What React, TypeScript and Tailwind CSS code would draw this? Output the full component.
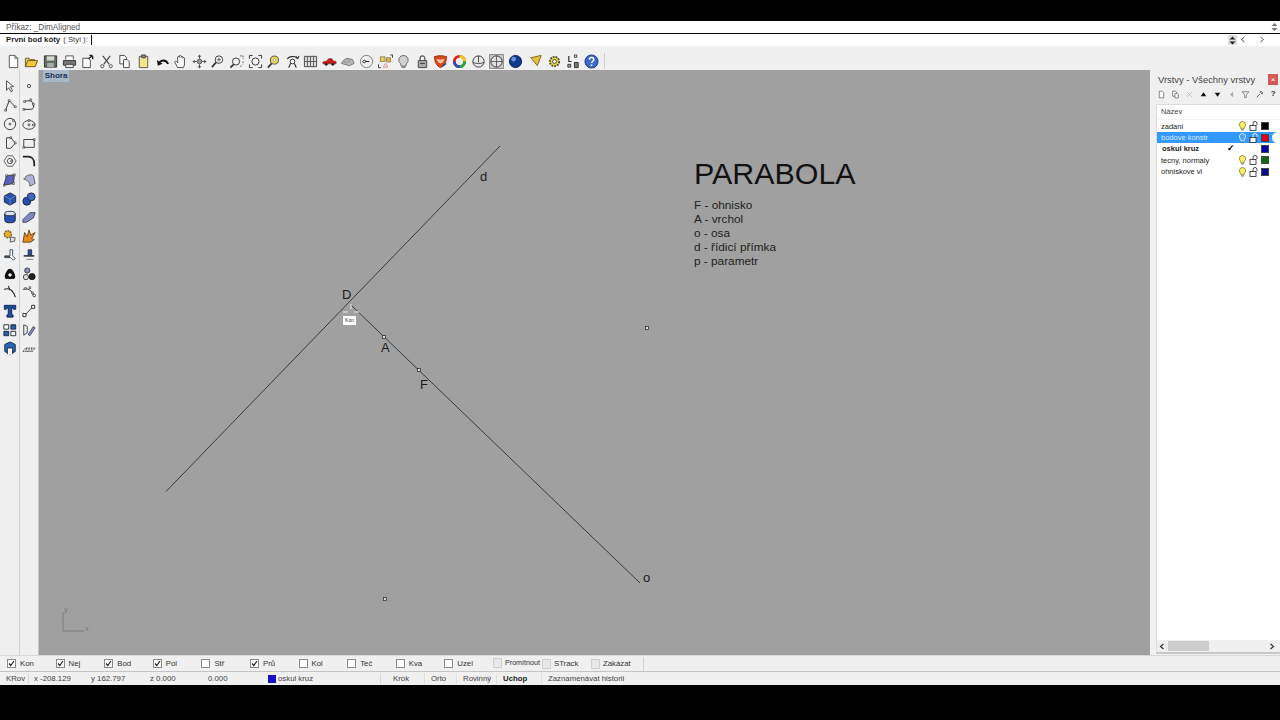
import type { ReactNode } from "react";

const FONT = "font-['Liberation_Sans',Arial,sans-serif]";

function Ico({ children, size = 16 }: { children: ReactNode; size?: number }) {
  return (
    <svg width={size} height={size} viewBox="0 0 16 16" fill="none" stroke="#333" strokeWidth="1" strokeLinejoin="round">
      {children}
    </svg>
  );
}

const Pt = ({ x, y }: { x: number; y: number }) => <rect x={x - 1} y={y - 1} width="2" height="2" fill="#fff" stroke="#222" strokeWidth="0.7" />;

// top toolbar, left to right
const topIcons: ReactNode[] = [
  <><path d="M3.5 1.5h6l3 3v10h-9z" fill="#fff" stroke="#555" /><path d="M9.5 1.5v3h3" stroke="#555" /></>,
  <><path d="M1.5 13.5v-9h4l1 1.5h5v1.5" fill="#e8c860" stroke="#6a5a20" /><path d="M1.5 13.5l2.5-6.5h10.5l-2.5 6.5z" fill="#f0c838" stroke="#6a5a20" /></>,
  <><rect x="1.5" y="2" width="13" height="12" fill="#5f6f60" stroke="#333" /><rect x="4" y="2.5" width="8" height="4.5" fill="#d8d8d8" stroke="none" /><rect x="4.5" y="9.5" width="7" height="4.5" fill="#aab0a8" stroke="none" /></>,
  <><path d="M4 6V2h8v4" fill="#fff" stroke="#555" /><path d="M1.5 7h13v5h-13z" fill="#777" /><path d="M4 11h8v3.5H4z" fill="#e8e8e8" stroke="#444" /></>,
  <><path d="M3 4.5h6l2 2v8H3z" fill="#fff" stroke="#444" /><path d="M9 5l4-3M13.5 2v3.5M10 1.5h3.5" stroke="#222" strokeWidth="1.4" /></>,
  <><path d="M4 2l7 9M12 2l-7 9" stroke="#444" strokeWidth="1.2" /><circle cx="3.5" cy="13" r="1.7" stroke="#555" /><circle cx="12.5" cy="13" r="1.7" stroke="#555" /></>,
  <><path d="M3 1.5h5l2 2v7H3z" fill="#fff" stroke="#444" /><path d="M7 6h4l2 2v6.5H7z" fill="#fff" stroke="#444" /></>,
  <><rect x="3.5" y="2.5" width="9" height="12" fill="#f2e68a" stroke="#555" /><rect x="6" y="1" width="4" height="3" fill="#888" stroke="#444" /></>,
  <><path d="M14 10.5C12 6.5 8 6 5 8.5" stroke="#111" strokeWidth="2.2" /><path d="M2 6.5l1 6 5-2z" fill="#111" stroke="none" /></>,
  <path d="M5 14.5L2 9c-.5-1.2 1-1.8 1.8-.8L5 9.5V3.5c0-1.3 1.8-1.300 1.800 0V2.500c0-1.300 1.900-1.300 1.900 0v1c0-1.200 1.800-1.200 1.800 0v1c0-1.100 1.700-1.100 1.700 0v6c0 2-.7 3-1.200 4z" fill="#fff" stroke="#333" strokeWidth="0.9" />,
  <><circle cx="8" cy="8" r="2.5" fill="#999" stroke="#555" /><path d="M8 1v4M8 11v4M1 8h4M11 8h4" stroke="#444" /><path d="M8 .5l-2 2.5h4zM8 15.5l-2-2.500h4zM.5 8L3 6v4zM15.5 8L13 6v4z" fill="#555" stroke="none" /></>,
  <><circle cx="9.5" cy="6" r="4" fill="#f4f4f4" stroke="#333" /><path d="M6.5 9L2 14" stroke="#333" strokeWidth="1.8" /><path d="M7.5 6h4M9.5 4v4" stroke="#333" strokeWidth="0.8" /></>,
  <><circle cx="7.5" cy="8" r="3.8" fill="#f4f4f4" stroke="#333" /><path d="M5 11l-3.5 3.5" stroke="#333" strokeWidth="1.8" /><path d="M12 2h3v3M15 8v3M12 13h2" stroke="#444" strokeDasharray="1.5 1" /></>,
  <><circle cx="8" cy="8" r="3.8" fill="#f4f4f4" stroke="#333" /><path d="M1.5 5V1.5H5M11 1.5h3.5V5M14.5 11v3.5H11M5 14.5H1.5V11" stroke="#333" /></>,
  <><circle cx="9" cy="6.5" r="4.3" fill="#f0d850" stroke="#444" /><path d="M6 10l-4 4.5" stroke="#333" strokeWidth="1.8" /><circle cx="9" cy="6.5" r="1.5" fill="#fff" stroke="#aa8" /></>,
  <><path d="M2.5 5.5C4 2 11 1.5 13.5 5M11.5 2.5l2 2.5 1.500-3" stroke="#222" strokeWidth="1.1" /><circle cx="8" cy="8" r="2.5" fill="#fff" stroke="#333" /><path d="M6 10l-2 4.5M10 10l2 4.5" stroke="#222" strokeWidth="1.2" /></>,
  <><rect x="1.5" y="2.5" width="13" height="11" fill="#ddd" stroke="#444" /><path d="M8 2.5v11M1.5 8h13M4.7 2.5v11M11.3 2.5v11" stroke="#555" /></>,
  <><path d="M1 10.500V8.500l4-1 2-2.500h3.500l1.500 2.500 3 .5v2.500H1z" fill="#c81818" stroke="#801010" strokeWidth="0.6" /><circle cx="4.500" cy="11" r="1.500" fill="#222" stroke="none" /><circle cx="11.500" cy="11" r="1.500" fill="#222" stroke="none" /></>,
  <><path d="M1.5 10l2-3 4-2.5 6 1.500 1.500 4-5 2.500z" fill="#bbb" stroke="#777" /><path d="M4 7l5 5M7 5l5 5.500M2.500 10l9-3" stroke="#888" strokeWidth="0.6" /></>,
  <><circle cx="8" cy="8" r="6.5" fill="#f2f2f2" stroke="#777" /><path d="M5 8h6" stroke="#222" strokeWidth="1.2" /><circle cx="5.5" cy="8" r="1.4" fill="#fff" stroke="#222" /></>,
  <><rect x="2.5" y="3" width="5" height="5" fill="#e8d050" stroke="#886" /><rect x="9" y="4" width="4.5" height="4.5" fill="#e8b040" stroke="#886" /><path d="M8 10l2.5 4h-5z" fill="#eee" stroke="#c66" strokeWidth="0.7" /><path d="M0.5 11v3.5H3M13 1h2.500v3" stroke="#333" /></>,
  <><path d="M8 1.5a5 5 0 0 1 3 9l-.5 2.5h-5L5 10.500a5 5 0 0 1 3-9z" fill="#d0d0d0" stroke="#666" /><rect x="6" y="13" width="4" height="2" fill="#888" stroke="none" /></>,
  <><rect x="3.5" y="7" width="9" height="7.5" fill="#aaa" stroke="#444" /><path d="M5.5 7V4.500a2.500 2.500 0 0 1 5 0V7" stroke="#555" strokeWidth="1.3" /><rect x="5.5" y="9.5" width="5" height="1.2" fill="#444" stroke="none" /></>,
  <><path d="M1.5 3c3-1.500 10-1.500 13 0-.5 6-2.500 10-6.500 11.500C4 13 2 9 1.500 3z" fill="#d84818" stroke="#903010" /><path d="M3.5 5c3 1 6 1 9 0-1 3-3 5-4.500 5S4.500 8 3.500 5z" fill="#f0c0a0" stroke="none" /><path d="M10 13l4-3" stroke="#2040a0" strokeWidth="1.5" /></>,
  <><circle cx="8" cy="8" r="5.5" stroke="#e02020" strokeWidth="3" /><path d="M8 2.5a5.500 5.500 0 0 1 5.500 5.500" stroke="#e8d020" strokeWidth="3" /><path d="M13.5 8A5.500 5.500 0 0 1 8 13.500" stroke="#20b040" strokeWidth="3" /><path d="M8 13.5A5.500 5.500 0 0 1 2.500 8" stroke="#2050d0" strokeWidth="3" /></>,
  <><circle cx="8" cy="8" r="6" fill="#e8e8e8" stroke="#333" /><path d="M2 9c3 1.500 9 1.500 12 0M8 2v7" stroke="#444" /></>,
  <><rect x="0.5" y="0.5" width="15" height="15" fill="#c8c8c8" stroke="#888" /><circle cx="8" cy="8" r="6" fill="#e0e0e0" stroke="#333" /><path d="M2 8h12M8 2v12" stroke="#444" strokeWidth="0.8" /></>,
  <><circle cx="8" cy="8" r="6.5" fill="#103a8c" stroke="#0a2050" /><circle cx="6" cy="5.5" r="2.5" fill="#6a90d8" stroke="none" /></>,
  <path d="M3 4l11-2.500-4 11z" fill="#e8c040" stroke="#806020" />,
  <><circle cx="8" cy="8" r="5" fill="#e8d040" stroke="#554" strokeDasharray="2 1" strokeWidth="2" /><circle cx="8" cy="8" r="2" fill="#fff" stroke="#444" /></>,
  <><path d="M3 2v6h3" stroke="#333" strokeWidth="1.3" /><rect x="9" y="1" width="2.5" height="2.5" fill="#fff" stroke="#333" /><rect x="2" y="11" width="3" height="3" fill="#aaa" stroke="#333" /><rect x="9" y="9" width="4" height="5.5" fill="#777" stroke="#333" /></>,
  <><circle cx="8" cy="8" r="7" fill="#3a68c8" stroke="#203880" /><path d="M5.8 6c0-3 4.600-3 4.600 0 0 1.800-2.300 1.800-2.300 3.700" stroke="#fff" strokeWidth="1.6" /><circle cx="8" cy="12" r="1" fill="#fff" stroke="none" /></>,
];

const blueFill = "#2a50b0";

// left toolbar, two per row
const leftIcons: [ReactNode, ReactNode][] = [
  [<path d="M4 2l8 6.500-3.500.5 2.500 4.500-2 1-2.500-4.500L4 13z" fill="#eee" stroke="#444" />, <circle cx="8" cy="8" r="1.8" fill="#fff" stroke="#333" />],
  [<><path d="M3 14L7 3l7 7" stroke="#222" /><Pt x={3} y={14} /><Pt x={7} y={3} /><Pt x={14} y={10} /></>, <><path d="M2 13h8c3 0 4-3 3-6S9 2 3 4" stroke="#222" /><Pt x={2} y={13} /><Pt x={13} y={7} /><Pt x={3} y={4} /><Pt x={10} y={2} /></>],
  [<><circle cx="8" cy="8" r="6.5" stroke="#333" /><Pt x={8} y={8} /><Pt x={12} y={4} /></>, <><ellipse cx="8" cy="9" rx="7" ry="5" stroke="#333" /><Pt x={8} y={9} /><Pt x={8} y={4} /><Pt x={13} y={9} /></>],
  [<><path d="M4 2h5l5 6-5 6H4z" stroke="#333" /><Pt x={9} y={2} /><Pt x={14} y={8} /></>, <><rect x="2" y="4" width="12" height="9" stroke="#333" /><Pt x={14} y={4} /><Pt x={2} y={13} /></>],
  [<><path d="M5 2h6l4 6-4 6H5L1 8z" stroke="#555" /><circle cx="8" cy="8" r="3" stroke="#444" /><Pt x={10} y={8} /></>, <path d="M1 3h6c4 0 7 3 7 8v3" stroke="#222" strokeWidth="2" />],
  [<><path d="M4 3l9-1-1 10-11 2z" fill="#5a60b8" stroke="#333" /><Pt x={4} y={3} /><Pt x={13} y={2} /><Pt x={12} y={12} /><Pt x={1} y={14} /></>, <path d="M2 7c3-5 8-6 11-4l2 9-6 3c0-4-2-7-7-8z" fill="#b0b4d8" stroke="#555" />],
  [<><path d="M8 1l6.500 3.500v7L8 15l-6.500-3.500v-7z" fill={blueFill} stroke="#123" /><path d="M8 8l6.500-3.500M8 8v7M8 8L1.500 4.500" stroke="#8aa0e0" strokeWidth="0.7" /></>, <><circle cx="5.5" cy="10.5" r="4.5" fill={blueFill} stroke="#123" /><circle cx="10.5" cy="5.5" r="4.5" fill="#4064c8" stroke="#123" /></>],
  [<><path d="M2 4v8c0 3.500 12 3.500 12 0V4" fill={blueFill} stroke="#123" /><ellipse cx="8" cy="4" rx="6" ry="2.5" fill="#dde" stroke="#234" /></>, <path d="M1 11l8-8h6l-2 6-8 5H1z" fill="#8088c0" stroke="#345" />],
  [<><circle cx="5.5" cy="6" r="4" fill="#e8b020" stroke="#654" strokeDasharray="2 1" strokeWidth="1.5" /><path d="M9 9l5 1-1 4-5 1z" fill="#ddd" stroke="#555" /></>, <path d="M1 15l2-11 3 5 2-8 2 6 5-3-4 7 3 1-4 3z" fill="#e88820" stroke="#604010" />],
  [<><path d="M2 9h6V2h3v7l3 3-2 2-3-3H2z" fill="#fff" stroke="#345" /><path d="M2 10h6" stroke="#444" strokeWidth="2" /></>, <><path d="M2 9h12" stroke="#345" strokeWidth="2" /><path d="M7 8V2h4v6z" fill={blueFill} stroke="#234" /><path d="M5 13h8" stroke="#777" /></>],
  [<path d="M8 2c3 0 6 6 6 9 0 2-2 3-3.500 2.500-1.500.5-3.500.5-5 0C4 14 2 13 2 11c0-3 3-9 6-9zM8 7a2 2 0 1 0 .01 0z" fill="#111" fillRule="evenodd" stroke="none" />, <><circle cx="6" cy="4" r="3" fill="#8a90b8" stroke="#333" /><circle cx="4.5" cy="11.5" r="3" fill="#ddd" stroke="#333" /><circle cx="11.5" cy="11" r="3.5" fill="#222" stroke="#111" /></>],
  [<path d="M1 5c6-2 11 1 13 9M6 1l2 5" stroke="#222" strokeWidth="1.2" />, <><path d="M1 5c6-2 10 1 12 7" stroke="#222" /><Pt x={4} y={4} /><Pt x={9} y={3} /><Pt x={12} y={9} /><circle cx="14" cy="12" r="1.5" fill="#fff" stroke="#333" /></>],
  [<path d="M1.500 1.500h13v4.500h-2.500l-.5-1.500H10V12l1.500.5v2.500h-7v-2.500L6 12V4.500H4.500L4 6H1.500z" fill="#1f4fa0" stroke="#0a2050" />, <><path d="M3.500 12.500L12 3.500" stroke="#333" /><rect x="1" y="11" width="3.5" height="3.5" fill="#fff" stroke="#222" /><rect x="11" y="1.5" width="3.5" height="3.5" fill="#fff" stroke="#222" /></>],
  [<><rect x="1" y="2" width="5.5" height="5" fill="#fff" stroke="#123" /><rect x="9" y="2" width="5.5" height="5" fill="#2a60b0" stroke="#123" /><rect x="1" y="9.5" width="5.5" height="5" fill="#2a60b0" stroke="#123" /><rect x="9" y="9.5" width="5.5" height="5" fill="#fff" stroke="#123" /></>, <><path d="M2 2v12M2 2l4 2v7l-4 3" stroke="#333" /><path d="M7 13l6-9 2 1.500-6 9z" fill="#8090c8" stroke="#445" /></>],
  [<><path d="M2 4l6-3 6 3v8l-6 3-6-3z" fill="#2a64b8" stroke="#123" /><path d="M5 15V8h6v7" fill="#fff" stroke="#123" /></>, <path d="M1 12l3-4h11l-3 4zM5 8v4M8 8v4M11 8v4" fill="#ddd" stroke="#555" strokeDasharray="2 0.8" />],
];

function TopBar() {
  return (
    <div className="flex items-center h-[18px] bg-[#f0f0f0] pl-[4px]">
      {topIcons.map((icon, i) => (
        <div key={i} className={`flex items-center justify-center w-[18.6px] h-[18px] shrink-0 ${i === 28 ? "ml-[2px]" : ""}`}>
          <Ico size={15}>{icon}</Ico>
        </div>
      ))}
      <div className="ml-[3px] h-[16px] border-l border-[#d0d0d0]" />
    </div>
  );
}

function LeftBar() {
  return (
    <div className="relative w-[39px] shrink-0 bg-[#f0f0f0] pt-[7px] border-r border-[#c8c8c8]">
      <div className="absolute left-[19px] top-0 bottom-0 border-l border-[#d0d0d0]" />
      {leftIcons.map(([a, b], i) => (
        <div key={i} className="flex h-[18.72px]">
          <div className="flex items-center justify-center w-[20px]"><Ico size={14}>{a}</Ico></div>
          <div className="flex items-center justify-center w-[18px]"><Ico size={14}>{b}</Ico></div>
        </div>
      ))}
    </div>
  );
}

const labels = [
  { t: "D", x: 342, y: 287 },
  { t: "d", x: 480, y: 169 },
  { t: "A", x: 381, y: 340 },
  { t: "F", x: 420, y: 377 },
  { t: "o", x: 643, y: 570 },
];

const notes = ["F - ohnisko", "A - vrchol", "o - osa", "d - řídicí přímka", "p - parametr"];

function Viewport() {
  return (
    <div className="relative flex-1 bg-[#a0a0a0] overflow-hidden">
      <div className="absolute left-[4px] top-0 h-[12px] w-[26px] bg-[#a9b8c8] flex items-center justify-center text-[8px] font-bold text-[#1c3050]">Shora</div>
      <svg className="absolute inset-0" width="1111" height="585" viewBox="39 70 1111 585" fill="none">
        <path d="M166 491.5L500 146" stroke="#222" strokeWidth="0.8" />
        <path d="M351 305L640 583" stroke="#222" strokeWidth="0.8" />
        {[[647, 328], [385, 599], [384, 337], [419, 370]].map(([x, y]) => (
          <rect key={`${x}-${y}`} x={x - 1.5} y={y - 1.5} width="3" height="3" fill="#ddd" stroke="#222" strokeWidth="0.7" />
        ))}
        <path d="M343 312h5M354 312h5M351 304v5" stroke="#eee" strokeWidth="1" />
        <path d="M63 612v19h21" stroke="#7c7c7c" strokeWidth="1" />
      </svg>
      <span className="absolute left-[304px] top-[246px] w-[13px] h-[9px] bg-white text-[5px] leading-[9px] text-center text-[#333]">Kon</span>
      {labels.map((l) => (
        <span key={l.t} className="absolute text-[13px] leading-[16px] text-[#1c1c1c]" style={{ left: l.x - 39, top: l.y - 70 }}>{l.t}</span>
      ))}
      <span className="absolute left-[25px] top-[535px] text-[7px] text-[#777]">y</span>
      <span className="absolute left-[46px] top-[554px] text-[7px] text-[#777]">x</span>
      <div className="absolute left-[655px] top-[86px] text-[#111]">
        <div className="text-[30.4px] leading-[34px]">PARABOLA</div>
        <div className="mt-[9px] text-[11.8px] leading-[13.9px] text-[#222]">
          {notes.map((n) => <div key={n}>{n}</div>)}
        </div>
      </div>
    </div>
  );
}

const layers = [
  { name: "zadani", color: "#000000", on: true },
  { name: "bodove konstr", color: "#e00010", on: true, selected: true },
  { name: "oskul kruz", color: "#0000a8", current: true },
  { name: "tecny, normaly", color: "#0b6a1e", on: true },
  { name: "ohniskove vl", color: "#0a0a90", on: true },
];

const panelIcons: ReactNode[] = [
  <path d="M4 2h5l3 3v9H4z" fill="#fff" stroke="#333" />,
  <><path d="M3 2h5l2 2v7H3z" fill="#fff" stroke="#333" /><path d="M7 6h4l2 2v6H7z" fill="#fff" stroke="#333" /></>,
  <path d="M4 4l8 8M12 4l-8 8" stroke="#aaa" strokeWidth="1.2" />,
  <path d="M8 4l5 7H3z" fill="#111" stroke="none" />,
  <path d="M8 12l5-7H3z" fill="#111" stroke="none" />,
  <path d="M5 8l6-5v10z" fill="#aaa" stroke="none" />,
  <path d="M2 3h12L9.5 8.5V13l-3 1V8.5z" fill="#eee" stroke="#444" />,
  <path d="M3 13l6-6M9 3a3 3 0 0 1 4 4l-2-1-2-2z" stroke="#333" strokeWidth="1.3" />,
];

function Bulb({ on }: { on?: boolean }) {
  return (
    <svg width="9" height="10" viewBox="0 0 9 10" fill="none">
      <path d="M4.5 .5a3.200 3.200 0 0 1 1.800 5.800L6 8H3l-.3-1.700A3.200 3.200 0 0 1 4.500 .5z" fill={on ? "#f6ee70" : "#4aa0ff"} stroke={on ? "#807a10" : "#fff"} strokeWidth="0.8" />
      <path d="M3.3 9h2.400" stroke="#666" />
    </svg>
  );
}

function OpenLock({ selected }: { selected?: boolean }) {
  return (
    <svg width="10" height="10" viewBox="0 0 10 10" fill="none">
      <rect x="1" y="4.5" width="6" height="5" fill="#fff" stroke="#222" strokeWidth="0.8" />
      <path d="M4 4.5V2.500a2 2 0 0 1 4 0V4" stroke={selected ? "#fff" : "#333"} strokeWidth="0.9" />
    </svg>
  );
}

function LayerPanel() {
  return (
    <div className="w-[130px] shrink-0 bg-[#f0f0f0] flex flex-col pb-[1px]">
      <div className="relative h-[16px] flex items-end pl-[8px] text-[9.4px] leading-[13px] text-[#444]">
        Vrstvy - Všechny vrstvy
        <div className="absolute right-[2px] top-[4px] w-[10px] h-[11px] bg-[#d45a5a] flex items-center justify-center text-white text-[8px] leading-none">×</div>
      </div>
      <div className="flex items-center h-[16px] pl-[5px] mb-[2px] gap-[0.5px]">
        {panelIcons.map((icon, i) => (
          <div key={i} className="flex items-center justify-center w-[13.7px]">
            <Ico size={9}>{icon}</Ico>
          </div>
        ))}
        <div className="w-[13.7px] text-center text-[8px] font-bold text-[#333]">?</div>
      </div>
      <div className="flex-1 ml-[6px] bg-white border-t border-l border-[#dcdcdc] border-b-2 border-b-[#c8c8c8] flex flex-col min-h-0">
        <div className="h-[15px] pl-[4px] mb-[0.5px] flex items-center text-[7.5px] text-[#444] border-b border-[#f2f2f2]">Název</div>
        {layers.map((l) => (
          <div key={l.name} className={`relative flex items-center h-[11.4px] text-[7.5px] ${l.selected ? "bg-[#3399ff] text-[#dcecff]" : "text-[#222]"} ${l.current ? "font-bold text-[#111] pl-[5px]" : "pl-[4px]"}`}>
            <span className={`whitespace-nowrap ${l.current ? "w-[63px]" : "w-[64px]"}`}>{l.name}</span>
            <span className="w-[12px] text-center text-[9px] leading-none text-black">{l.current ? "✓" : ""}</span>
            <span className="w-[11px] flex justify-center">{!l.current && <Bulb on={!l.selected} />}</span>
            <span className="w-[11px] flex justify-center">{!l.current && <OpenLock selected={l.selected} />}</span>
            <span className="ml-[2px] w-[8px] h-[8px] border border-[#444]" style={{ backgroundColor: l.color }} />
            {l.selected && <span className="absolute right-0 w-[8px] h-[11px] rounded-l-full bg-white" />}
          </div>
        ))}
        <div className="flex-1" />
        <div className="h-[12px] flex items-center bg-[#f0f0f0] pl-[2px] pr-[5px] text-[#333]">
          <svg width="6" height="7" viewBox="0 0 6 7" fill="none"><path d="M4.5 1L1.5 3.5l3 2.500" stroke="#333" strokeWidth="1.2" /></svg>
          <div className="h-[10px] w-[41px] ml-[3px] bg-[#cdcdcd]" />
          <svg className="ml-auto" width="6" height="7" viewBox="0 0 6 7" fill="none"><path d="M1.5 1l3 2.500-3 2.500" stroke="#333" strokeWidth="1.2" /></svg>
        </div>
      </div>
    </div>
  );
}

const snaps = [
  { n: "Kon", on: true },
  { n: "Nej", on: true },
  { n: "Bod", on: true },
  { n: "Pol", on: true },
  { n: "Stř", on: false },
  { n: "Prů", on: true },
  { n: "Kol", on: false },
  { n: "Teč", on: false },
  { n: "Kva", on: false },
  { n: "Uzel", on: false },
];

function Check({ on }: { on: boolean }) {
  return (
    <span className="w-[9px] h-[9px] bg-white border border-[#8a8a8a] flex items-center justify-center">
      {on && (
        <svg width="7" height="7" viewBox="0 0 7 7" fill="none"><path d="M1 3.5l1.800 2L6 1" stroke="#222" strokeWidth="1.2" /></svg>
      )}
    </span>
  );
}

function SnapBar() {
  return (
    <div className="flex items-center h-[16px] bg-[#f0f0f0] pl-[7px] text-[7.8px] text-[#333] border-t border-[#d8d8d8]">
      {snaps.map((s) => (
        <div key={s.n} className="flex items-center gap-[4px] w-[48.6px] shrink-0">
          <Check on={s.on} />
          <span>{s.n}</span>
        </div>
      ))}
      <div className="flex items-center gap-[3px] w-[49px]">
        <span className="w-[9px] h-[10px] shrink-0 bg-[#e8e8e8] border border-[#cfcfcf]" />
        <span className="whitespace-nowrap text-[7.2px]">Promítnout</span>
      </div>
      <div className="flex items-center gap-[3px] w-[49px]">
        <span className="w-[9px] h-[10px] shrink-0 bg-[#e8e8e8] border border-[#cfcfcf]" />
        <span>STrack</span>
      </div>
      <div className="flex items-center gap-[3px] w-[52px]">
        <span className="w-[9px] h-[10px] shrink-0 bg-[#e8e8e8] border border-[#cfcfcf]" />
        <span>Zakázat</span>
      </div>
      <div className="h-[14px] border-l border-[#d4d4d4]" />
    </div>
  );
}

function StatusBar() {
  return (
    <div className="flex items-center h-[14px] bg-[#f0f0f0] border-t border-[#c4c4c4] text-[7.8px] text-[#444] whitespace-nowrap">
      <div className="w-[28px] pl-[6px]">KRov</div>
      <div className="w-[58px] pl-[5px] border-l border-[#d8d8d8]">x -208.129</div>
      <div className="w-[59px] pl-[5px]">y 162.797</div>
      <div className="w-[58px] pl-[5px]">z 0.000</div>
      <div className="w-[65px] pl-[5px]">0.000</div>
      <div className="w-[112px] flex items-center gap-[2px]">
        <span className="w-[8px] h-[8px] bg-[#1a10c8]" />
        oskul kruz
      </div>
      <div className="w-[44px] pl-[12px] border-l border-[#d8d8d8]">Krok</div>
      <div className="w-[32px] pl-[6px] border-l border-[#e0e0e0]">Orto</div>
      <div className="w-[40px] pl-[6px] border-l border-[#e0e0e0]">Rovinný</div>
      <div className="w-[45px] pl-[6px] border-l border-[#e0e0e0] font-bold text-[#222]">Uchop</div>
      <div className="pl-[6px] border-l border-[#e0e0e0]">Zaznamenávat historii</div>
    </div>
  );
}

export default function App() {
  return (
    <div className={`h-[720px] w-[1280px] overflow-hidden bg-black pt-[21px] ${FONT}`}>
      <div className="relative h-[12px] bg-white flex items-center pl-[6px] pt-[3px] text-[8.2px] text-[#555]">
        Příkaz: _DimAligned
        <svg className="absolute right-[1px] top-[1px]" width="9" height="10" viewBox="0 0 9 10"><path d="M4.5 1l3 3h-6zM4.5 9l3-3h-6z" fill="#777" /></svg>
      </div>
      <div className="relative h-[13px] bg-white border-t border-black flex items-center pl-[6px] text-[7.8px] text-[#222]">
        <span className="font-bold">První bod kóty</span>
        <span className="ml-[3px] text-[#444]">( Styl ):</span>
        <span className="ml-[3px] h-[10px] border-l border-black" />
        <div className="absolute left-[1228px] top-[1px] w-[9px] h-[10px] bg-[#dcdcdc] flex flex-col items-center justify-center gap-[1px]">
          <svg width="7" height="9" viewBox="0 0 7 9"><path d="M3.5 0.5l3 3h-6zM3.5 8.500l3-3h-6z" fill="#222" /></svg>
        </div>
        <svg className="absolute left-[1240px] top-[2px]" width="6" height="7" viewBox="0 0 6 7" fill="none"><path d="M4.5 1L1.5 3.5l3 2.500" stroke="#555" /></svg>
        <svg className="absolute left-[1259px] top-[2px]" width="6" height="7" viewBox="0 0 6 7" fill="none"><path d="M1.5 1l3 2.500-3 2.500" stroke="#555" /></svg>
      </div>
      <div className="h-[6px] bg-[#f0f0f0]" />
      <TopBar />
      <div className="flex h-[585px]">
        <LeftBar />
        <Viewport />
        <LayerPanel />
      </div>
      <SnapBar />
      <StatusBar />
    </div>
  );
}
